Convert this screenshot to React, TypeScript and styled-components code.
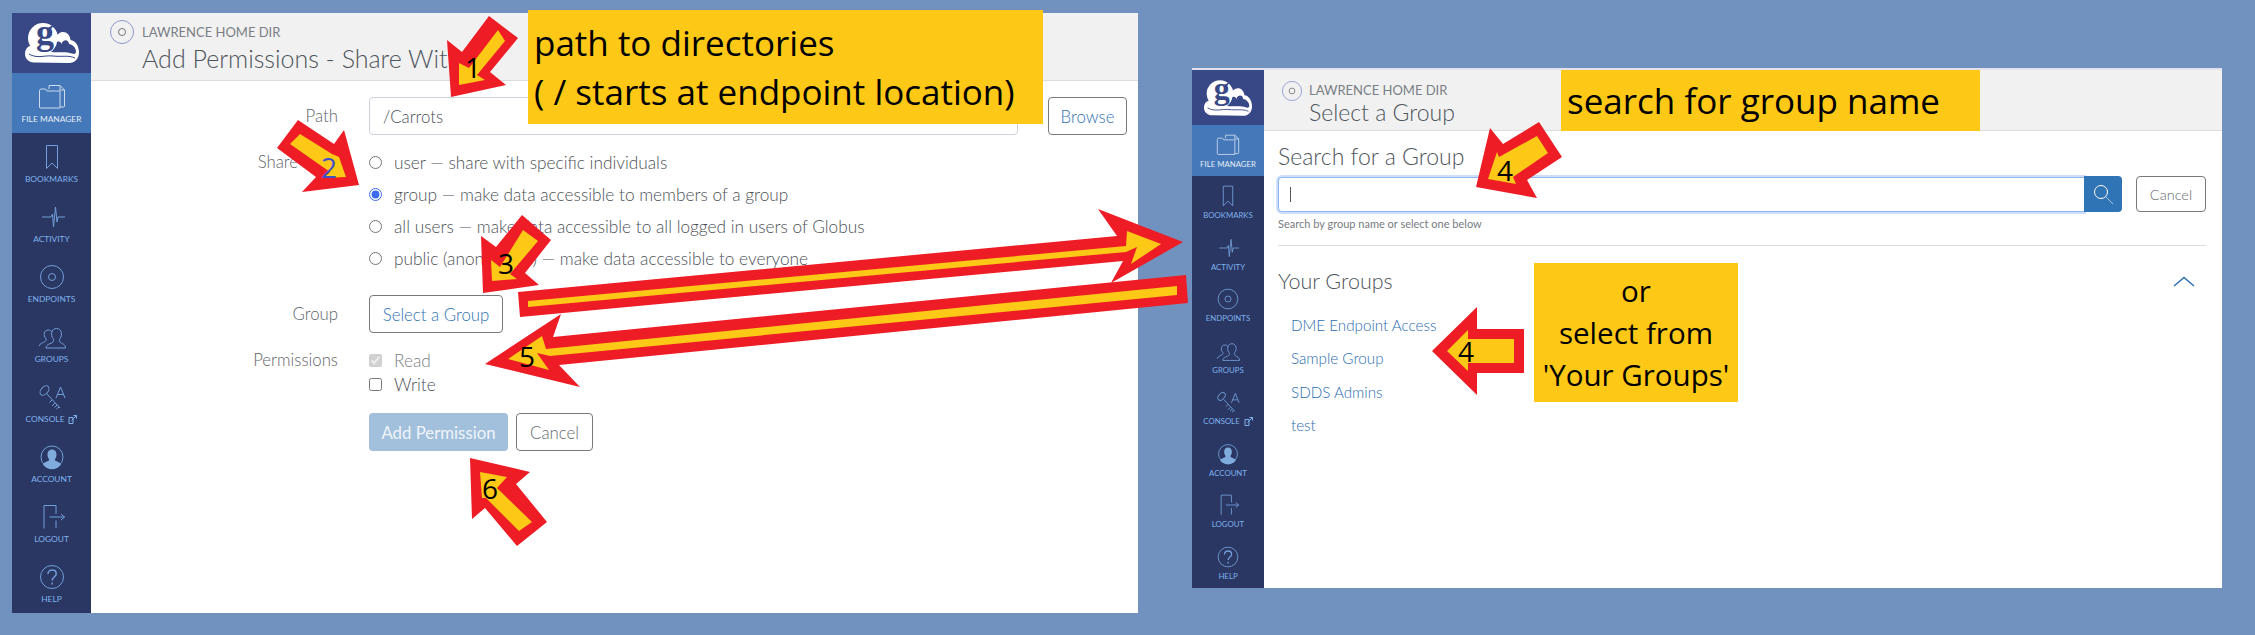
import React, { FC, ReactNode } from "react";
import styled, { createGlobalStyle } from "styled-components";

const GlobalStyle = createGlobalStyle`
  html, body {
    margin: 0;
    padding: 0;
    width: 2255px;
    height: 635px;
    overflow: hidden;
    background: #7192be;
    font-family: Lato, "Open Sans", sans-serif;
  }
`;

const Page = styled.div`
  position: relative;
  display: flex;
  justify-content: space-between;
  align-items: flex-start;
  width: 2255px;
  height: 635px;
  box-sizing: border-box;
  padding: 13px 33px 0 12px;
`;

const Panel = styled.div<{ $compact?: boolean }>`
  display: flex;
  background: #fff;
  box-sizing: border-box;
  width: ${(p) => (p.$compact ? "1030px" : "1126px")};
  height: ${(p) => (p.$compact ? "520px" : "600px")};
  margin-top: ${(p) => (p.$compact ? "55px" : "0")};
  border-top: ${(p) => (p.$compact ? "2px solid #e4e1ec" : "none")};
`;

const Sidebar = styled.nav<{ $compact?: boolean }>`
  flex: none;
  display: grid;
  grid-template-rows: ${(p) => (p.$compact ? "55px repeat(9, 51.44px)" : "60px repeat(9, 60px)")};
  width: ${(p) => (p.$compact ? "72px" : "79px")};
  background: #2b3763;
`;

const LogoBlock = styled.div`
  display: flex;
  align-items: center;
  justify-content: center;
  background: #384786;
`;

const LogoSvg = styled.svg<{ $compact?: boolean }>`
  width: ${(p) => (p.$compact ? "48px" : "54px")};
  height: ${(p) => (p.$compact ? "36px" : "40px")};
  overflow: visible;
`;

const NavItem = styled.div<{ $active?: boolean; $compact?: boolean }>`
  display: flex;
  flex-direction: column;
  align-items: center;
  gap: 2px;
  box-sizing: border-box;
  padding-top: ${(p) => (p.$compact ? "8px" : "10px")};
  background: ${(p) => (p.$active ? "#4578b8" : "transparent")};
  color: ${(p) => (p.$active ? "#e4edf8" : "#7fb2ec")};
`;

const NavIcon = styled.svg<{ $compact?: boolean }>`
  width: ${(p) => (p.$compact ? "24px" : "28px")};
  height: ${(p) => (p.$compact ? "24px" : "28px")};
  fill: none;
  stroke: currentColor;
  stroke-width: 1;
  opacity: 0.85;
`;

const NavLabel = styled.span<{ $compact?: boolean }>`
  display: flex;
  align-items: center;
  gap: 4px;
  font-size: ${(p) => (p.$compact ? "7.8px" : "8.4px")};
  line-height: ${(p) => (p.$compact ? "10px" : "12px")};
  height: ${(p) => (p.$compact ? "10px" : "12px")};
  white-space: nowrap;
  text-transform: uppercase;
`;

const ExternalIcon = styled.svg`
  width: 9px;
  height: 9px;
  fill: none;
  stroke: currentColor;
  stroke-width: 1;
`;

const Main = styled.main`
  flex: 1;
  display: flex;
  flex-direction: column;
  min-width: 0;
`;

const Header = styled.header<{ $compact?: boolean }>`
  flex: none;
  display: flex;
  align-items: flex-start;
  box-sizing: border-box;
  gap: ${(p) => (p.$compact ? "7px" : "8px")};
  height: ${(p) => (p.$compact ? "61px" : "68px")};
  padding: ${(p) => (p.$compact ? "11px 0 0 18px" : "7px 0 0 19px")};
  background: #f1f1f1;
  border-bottom: 1px solid #dcdcdc;
`;

const EndpointMark = styled.svg<{ $compact?: boolean }>`
  flex: none;
  width: ${(p) => (p.$compact ? "20px" : "24px")};
  height: ${(p) => (p.$compact ? "20px" : "24px")};
  fill: none;
  stroke-width: 1;
`;

const HeaderText = styled.div`
  display: flex;
  flex-direction: column;
`;

const EndpointName = styled.div<{ $compact?: boolean }>`
  font-size: 13px;
  line-height: 22px;
  margin-top: ${(p) => (p.$compact ? "-2px" : "1px")};
  color: #7a7f85;
  white-space: nowrap;
`;

const PageTitle = styled.h1<{ $compact?: boolean }>`
  margin: ${(p) => (p.$compact ? "-3px 0 0" : "1px 0 0")};
  font-size: ${(p) => (p.$compact ? "23px" : "25px")};
  line-height: 28px;
  font-weight: 300;
  color: #4f555c;
  white-space: nowrap;
`;

const Form = styled.form`
  display: flex;
  flex-direction: column;
  padding: 16px 11px 0 0;
`;

const FormRow = styled.div<{ $top?: number }>`
  display: grid;
  grid-template-columns: 247px 1fr;
  column-gap: 31px;
  margin-top: ${(p) => p.$top ?? 0}px;
`;

const RowLabel = styled.label<{ $height: number }>`
  text-align: right;
  font-size: 16.8px;
  font-weight: 300;
  line-height: ${(p) => p.$height}px;
  color: #5f646a;
`;

const FieldLine = styled.div`
  display: flex;
  gap: 30px;
`;

const PathInput = styled.div`
  flex: 1;
  display: flex;
  align-items: center;
  height: 38px;
  box-sizing: border-box;
  padding-left: 13px;
  border: 1px solid #cdd2d8;
  border-radius: 4px;
  font-size: 16.8px;
  font-weight: 300;
  color: #4c5157;
`;

const OutlineButton = styled.button<{ $width: number; $height?: number; $tone?: "link" | "muted"; $size?: number }>`
  flex: none;
  width: ${(p) => p.$width}px;
  height: ${(p) => p.$height ?? 38}px;
  padding: 0;
  background: #fff;
  border: 1px solid #77797c;
  border-radius: 4px;
  font-family: inherit;
  font-size: ${(p) => p.$size ?? 16.8}px;
  font-weight: 300;
  color: ${(p) => (p.$tone === "link" ? "#2f72b4" : "#666a70")};
`;

const PrimaryButton = styled.button`
  width: 139px;
  height: 38px;
  padding: 0;
  border: none;
  border-radius: 4px;
  background: #a2c0dc;
  font-family: inherit;
  font-size: 16.8px;
  color: #eef4f9;
`;

const ChoiceRow = styled.label<{ $height: number; $muted?: boolean }>`
  display: flex;
  align-items: center;
  gap: 12px;
  height: ${(p) => p.$height}px;
  font-size: 17.25px;
  font-weight: 300;
  color: ${(p) => (p.$muted ? "#7b7e82" : "#4c5157")};
  white-space: nowrap;

  input {
    width: 13px;
    height: 13px;
    margin: 0;
    accent-color: #3b6cf0;
  }
`;

const ActionRow = styled.div`
  display: flex;
  gap: 8px;
`;

const GroupBody = styled.div`
  display: flex;
  flex-direction: column;
  padding: 11px 16px 0 14px;
`;

const SearchTitle = styled.h2`
  margin: 0 0 6px;
  font-size: 23px;
  line-height: 28px;
  font-weight: 300;
  color: #4f555c;
`;

const SearchRow = styled.div`
  display: flex;
  align-items: center;
  justify-content: space-between;
`;

const SearchGroup = styled.div`
  display: flex;
`;

const SearchField = styled.div`
  display: flex;
  align-items: center;
  box-sizing: border-box;
  width: 806px;
  height: 35px;
  padding-left: 11px;
  border: 1px solid #8db7f4;
  border-right: none;
  border-radius: 4px 0 0 4px;
  box-shadow: 0 0 0 2px #cfdff9;
`;

const Caret = styled.span`
  width: 1px;
  height: 15px;
  background: #555;
`;

const SearchButton = styled.button`
  position: relative;
  display: flex;
  align-items: center;
  justify-content: center;
  width: 38px;
  height: 36px;
  margin-top: -1px;
  padding: 0;
  border: none;
  border-radius: 0 4px 4px 0;
  background: #2f74b5;
`;

const HelpText = styled.div`
  margin-top: 5px;
  font-size: 11px;
  line-height: 14px;
  color: #777c82;
`;

const Divider = styled.hr`
  width: 100%;
  margin: 14px 0 0;
  border: none;
  border-top: 1px solid #dcdcdc;
`;

const GroupsHeader = styled.div`
  display: flex;
  align-items: center;
  justify-content: space-between;
  height: 28px;
  margin-top: 21px;
  padding-right: 11px;
  font-size: 21.5px;
  font-weight: 300;
  color: #4f555c;
`;

const GroupList = styled.ul`
  margin: 14px 0 0;
  padding: 0 0 0 13px;
  list-style: none;
`;

const GroupLink = styled.li`
  height: 33.3px;
  line-height: 33.3px;
  font-size: 15.2px;
  font-weight: 300;
  color: #2a6cb0;
`;

const Overlay = styled.svg`
  position: absolute;
  left: 0;
  top: 0;
  width: 2255px;
  height: 635px;
  pointer-events: none;
`;

const Note = styled.div<{ $x: number; $y: number; $w: number; $h: number; $center?: boolean }>`
  position: absolute;
  left: ${(p) => p.$x}px;
  top: ${(p) => p.$y}px;
  width: ${(p) => p.$w}px;
  height: ${(p) => p.$h}px;
  box-sizing: border-box;
  display: flex;
  flex-direction: column;
  justify-content: center;
  align-items: ${(p) => (p.$center ? "center" : "flex-start")};
  padding-left: ${(p) => (p.$center ? "0" : "6px")};
  background: #fec817;
  font-family: "Open Sans", sans-serif;
  font-size: ${(p) => (p.$center ? "29.5px" : "35px")};
  color: #000;
  white-space: nowrap;
`;

const NoteLine = styled.div<{ $line: number }>`
  line-height: ${(p) => p.$line}px;
`;

const StepNumber = styled.span<{ $x: number; $y: number; $blue?: boolean }>`
  position: absolute;
  left: ${(p) => p.$x}px;
  top: ${(p) => p.$y}px;
  transform: translate(-50%, -50%);
  font-family: "Open Sans", sans-serif;
  font-size: 28px;
  line-height: 30px;
  color: ${(p) => (p.$blue ? "#3f51c8" : "#000")};
`;

const navEntries: { label: string; active?: boolean; external?: boolean; icon: ReactNode }[] = [
  {
    label: "File Manager",
    active: true,
    icon: (
      <>
        <path d="M11 6V2.500h11l4.500 4.500v16a1 1 0 0 1-1 1H22" />
        <path d="M22 2.500V7h4.500" />
        <path d="M1.500 24V7.500l1-1.500h5l1.500 2h13v17H2.500a1 1 0 0 1-1-1z" />
      </>
    ),
  },
  {
    label: "Bookmarks",
    icon: <path d="M8.500 2.500h11v23l-5.500-5.500-5.500 5.500z" />,
  },
  {
    label: "Activity",
    icon: <path d="M4 14h9l1.500-3 1 13 2-20 1.500 15 1-5h7" />,
  },
  {
    label: "Endpoints",
    icon: (
      <>
        <circle cx="14" cy="14" r="11.500" />
        <circle cx="14" cy="14" r="3.500" />
      </>
    ),
  },
  {
    label: "Groups",
    icon: (
      <>
        <path d="M1.500 23c0-3 4-3 6-5 1-1 1-2 0-3-2-2-2-8 3-8 1.500 0 3 .8 3.500 2" />
        <path d="M8 25c0-4 5-4 7-6 1-1.200 1-2.200 0-3.500-2.500-3-2-10 3.500-10s6 7 3.500 10c-1 1.300-1 2.300 0 3.500 2 2 5.500 2 5.500 6z" />
      </>
    ),
  },
  {
    label: "Console",
    external: true,
    icon: (
      <>
        <ellipse cx="6.500" cy="7.500" rx="3.500" ry="5.500" transform="rotate(40 6.500 7.500)" />
        <path d="M9 11l13 14M14 17l-2.500 2.500M17 20l-3 3M19 22l-2.500 2.500M21 24l-2.500 2" />
        <path d="M18 15l4.500-11L27 15M19.500 11.500h6" />
      </>
    ),
  },
  {
    label: "Account",
    icon: (
      <>
        <circle cx="14" cy="14" r="11" />
        <path
          fill="#8ec1f2"
          stroke="none"
          d="M14 6.500c3 0 4.500 2.500 4.500 5 0 2-.7 3.500-1.500 4.500v1.500c1.500 1 5 1.500 6 4a11 11 0 0 1-18 0c1-2.500 4.500-3 6-4V16c-.8-1-1.500-2.500-1.500-4.500 0-2.500 1.500-5 4.500-5z"
        />
      </>
    ),
  },
  {
    label: "Logout",
    icon: <path d="M18 11V2.500H6v23M18 17.500v7.500M11.500 14h15M23 11l3.500 3-3.500 3" />,
  },
  {
    label: "Help",
    icon: (
      <>
        <circle cx="14" cy="14" r="11.500" />
        <path strokeWidth="1.500" d="M10 11c0-2.500 2-4 4.200-4s4 1.500 4 3.700c0 3.300-4 3.300-4 6.800M14.200 19.500v2" />
      </>
    ),
  },
];

const SideNav: FC<{ compact?: boolean }> = ({ compact }) => (
  <Sidebar $compact={compact}>
    <LogoBlock>
      <LogoSvg viewBox="0 0 54 40" $compact={compact}>
        <circle cx="18" cy="15" r="15" fill="#fff" />
        <path
          fill="#fff"
          d="M9 39.500C3 39.500 0 35 0 31c0-5 3-8 7-8.500l24-8c1-3 3.500-5.500 7-5.500 4 0 7 3 7.500 8 5 .500 8.500 6 8.500 12.500 0 6-4 10.500-10 10.500z"
        />
        <path
          fill="#384786"
          d="M32 19c2-1 3.500-.500 4.500 2 1.500-5 7-5 7.500 0 4 .500 7 4 7 8 0 1.500-2 2.500-4 1.500-6-2.500-15-.500-21-1.500 3-2.500 5.500-6 6-10z"
        />
        <path fill="none" stroke="#384786" strokeWidth="1" d="M4 31c8 5 16 1 24 2 8 1 16-1 22 2" />
        <text x="20" y="21" fontFamily="'Liberation Serif', serif" fontWeight="700" fontSize="36" fill="#384786" textAnchor="middle">
          g
        </text>
      </LogoSvg>
    </LogoBlock>
    {navEntries.map((entry) => (
      <NavItem key={entry.label} $active={entry.active} $compact={compact}>
        <NavIcon viewBox="0 0 28 28" $compact={compact}>
          {entry.icon}
        </NavIcon>
        <NavLabel $compact={compact}>
          {entry.label}
          {entry.external && (
            <ExternalIcon viewBox="0 0 9 9">
              <path d="M1 2.500h4v6H1zM3.500 5.500l5-5M5.500.500h3v3" />
            </ExternalIcon>
          )}
        </NavLabel>
      </NavItem>
    ))}
  </Sidebar>
);

const PageHeader: FC<{ title: string; compact?: boolean }> = ({ title, compact }) => (
  <Header $compact={compact}>
    <EndpointMark viewBox="0 0 24 24" $compact={compact}>
      <circle cx="12" cy="12" r="11.500" stroke="#8c96cf" />
      <circle cx="12" cy="12" r="3.500" stroke="#777" />
    </EndpointMark>
    <HeaderText>
      <EndpointName $compact={compact}>LAWRENCE HOME DIR</EndpointName>
      <PageTitle $compact={compact}>{title}</PageTitle>
    </HeaderText>
  </Header>
);

type ArrowShape = { id: string; red: string; yellow: string };

const arrows: ArrowShape[] = [
  {
    id: "path",
    red: "489,16 518,38 490,72 506,85 451,97 447,40 462,52",
    yellow: "498,30 505,41 477,75 485,80 459,85 459,63 469,68",
  },
  {
    id: "share",
    red: "298,120 277,148 316,177 302,192 359,185 344,130 334,144",
    yellow: "300,134 290,144 330,172 323,178 346,177 339,157 332,154",
  },
  {
    id: "group",
    red: "522,215 551,240 525,273 539,285 483,293 481,236 496,247",
    yellow: "523,230 538,241 510,274 517,279 492,281 491,260 500,267",
  },
  {
    id: "to-select",
    red: "518,292 1117,236 1098,209 1183,242 1111,283 1123,261 520,317",
    yellow: "528,301 1126,246 1127,231 1161,244 1131,264 1137,247 1126,252 528,307",
  },
  {
    id: "from-select",
    red: "1186,275 553,337 561,314 485,364 580,387 559,365 1188,303",
    yellow: "1177,286 546,349 542,336 508,359 549,370 537,353 550,356 1177,295",
  },
  {
    id: "add",
    red: "470,458 530,472 516,484 547,522 517,546 485,508 472,519",
    yellow: "480,472 507,477 497,488 532,522 519,531 486,498 482,498",
  },
  {
    id: "search",
    red: "1476,187 1490,128 1503,144 1539,122 1562,157 1527,180 1537,198",
    yellow: "1488,179 1497,152 1499,157 1537,136 1548,153 1513,177 1516,184",
  },
  {
    id: "your-groups",
    red: "1432,351 1477,307 1477,329 1524,329 1524,373 1477,373 1477,395",
    yellow: "1447,351 1468,330 1468,339 1514,339 1514,363 1468,363 1468,371",
  },
];

const steps = [
  { n: 1, x: 473, y: 67 },
  { n: 2, x: 329, y: 167, blue: true },
  { n: 3, x: 506, y: 263 },
  { n: 5, x: 527, y: 356 },
  { n: 6, x: 490, y: 488 },
  { n: 4, x: 1505, y: 170 },
  { n: 4, x: 1466, y: 351 },
];

const shareOptions = [
  { id: "user", text: "user — share with specific individuals" },
  { id: "group", text: "group — make data accessible to members of a group", checked: true },
  { id: "all", text: "all users — make data accessible to all logged in users of Globus" },
  { id: "public", text: "public (anonymous) — make data accessible to everyone" },
];

const App: FC = () => (
  <>
    <GlobalStyle />
    <Page>
      <Panel>
        <SideNav />
        <Main>
          <PageHeader title="Add Permissions - Share With" />
          <Form>
            <FormRow>
              <RowLabel $height={38}>Path</RowLabel>
              <FieldLine>
                <PathInput>/Carrots</PathInput>
                <OutlineButton type="button" $width={79} $tone="link">
                  Browse
                </OutlineButton>
              </FieldLine>
            </FormRow>
            <FormRow $top={11}>
              <RowLabel $height={32}>Share With</RowLabel>
              <div>
                {shareOptions.map((option) => (
                  <ChoiceRow key={option.id} $height={32}>
                    <input type="radio" name="share" value={option.id} defaultChecked={option.checked} />
                    {option.text}
                  </ChoiceRow>
                ))}
              </div>
            </FormRow>
            <FormRow $top={21}>
              <RowLabel $height={38}>Group</RowLabel>
              <FieldLine>
                <OutlineButton type="button" $width={134} $tone="link">
                  Select a Group
                </OutlineButton>
              </FieldLine>
            </FormRow>
            <FormRow $top={15}>
              <RowLabel $height={24}>Permissions</RowLabel>
              <div>
                <ChoiceRow $height={24} $muted>
                  <input type="checkbox" defaultChecked disabled />
                  Read
                </ChoiceRow>
                <ChoiceRow $height={24}>
                  <input type="checkbox" />
                  Write
                </ChoiceRow>
              </div>
            </FormRow>
            <FormRow $top={17}>
              <span />
              <ActionRow>
                <PrimaryButton type="button">Add Permission</PrimaryButton>
                <OutlineButton type="button" $width={77}>
                  Cancel
                </OutlineButton>
              </ActionRow>
            </FormRow>
          </Form>
        </Main>
      </Panel>

      <Panel $compact>
        <SideNav compact />
        <Main>
          <PageHeader title="Select a Group" compact />
          <GroupBody>
            <SearchTitle>Search for a Group</SearchTitle>
            <SearchRow>
              <SearchGroup>
                <SearchField>
                  <Caret />
                </SearchField>
                <SearchButton type="button" aria-label="Search">
                  <svg width="24" height="24" viewBox="0 0 24 24" fill="none">
                    <circle cx="10" cy="10" r="6.500" stroke="#fff" strokeWidth="1" />
                    <path d="M15 15l7 7" stroke="#a9c6e4" strokeWidth="1" />
                  </svg>
                </SearchButton>
              </SearchGroup>
              <OutlineButton type="button" $width={70} $height={36} $size={14.5}>
                Cancel
              </OutlineButton>
            </SearchRow>
            <HelpText>Search by group name or select one below</HelpText>
            <Divider />
            <GroupsHeader>
              Your Groups
              <svg width="22" height="11" viewBox="0 0 22 11" fill="none">
                <path d="M1 10L11 1.500 21 10" stroke="#2f74b5" strokeWidth="1.600" />
              </svg>
            </GroupsHeader>
            <GroupList>
              <GroupLink>DME Endpoint Access</GroupLink>
              <GroupLink>Sample Group</GroupLink>
              <GroupLink>SDDS Admins</GroupLink>
              <GroupLink>test</GroupLink>
            </GroupList>
          </GroupBody>
        </Main>
      </Panel>

      <Overlay viewBox="0 0 2255 635">
        {arrows.map((arrow) => (
          <g key={arrow.id}>
            <polygon points={arrow.red} fill="#ee1c25" />
            <polygon points={arrow.yellow} fill="#fec817" />
          </g>
        ))}
      </Overlay>

      <Note $x={528} $y={10} $w={515} $h={114}>
        <NoteLine $line={49}>path to directories</NoteLine>
        <NoteLine $line={49}>( / starts at endpoint location)</NoteLine>
      </Note>
      <Note $x={1561} $y={70} $w={419} $h={61}>
        <NoteLine $line={49}>search for group name</NoteLine>
      </Note>
      <Note $x={1534} $y={263} $w={204} $h={139} $center>
        <NoteLine $line={42}>or</NoteLine>
        <NoteLine $line={42}>select from</NoteLine>
        <NoteLine $line={42}>'Your Groups'</NoteLine>
      </Note>

      {steps.map((step) => (
        <StepNumber key={`${step.n}-${step.x}`} $x={step.x} $y={step.y} $blue={step.blue}>
          {step.n}
        </StepNumber>
      ))}
    </Page>
  </>
);

export default App;
